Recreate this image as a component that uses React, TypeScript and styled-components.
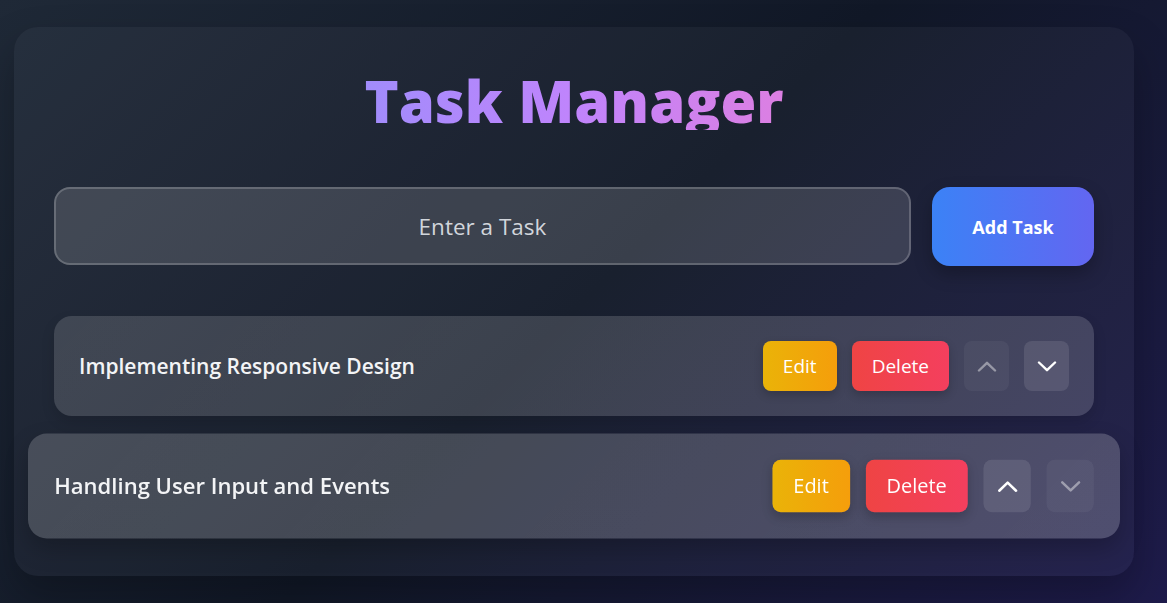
import React from "react";
import styled, { createGlobalStyle, css } from "styled-components";

const Global = createGlobalStyle`
  * { box-sizing: border-box; }
  html, body { margin: 0; padding: 0; }
  body {
    min-height: 100vh;
    font-family: "Open Sans", "Noto Sans", sans-serif;
    background: linear-gradient(135deg, #1f2937 0%, #111827 50%, #1e1b4b 100%);
    background-attachment: fixed;
    overflow: hidden;
  }
`;

const Page = styled.div`
  min-height: 100vh;
  padding: 27px 33px 27px 14px;
  display: flex;
  align-items: center;
`;

const Card = styled.main`
  width: 100%;
  padding: 40px;
  border-radius: 24px;
  background: rgba(255, 255, 255, 0.035);
  box-shadow: 0 20px 40px rgba(0, 0, 0, 0.25);
  display: flex;
  flex-direction: column;
`;

const Title = styled.h1`
  margin: 5px 0 57px;
  text-align: center;
  font-family: "Open Sans", sans-serif;
  font-size: 58px;
  font-weight: 800;
  line-height: 1;
  background: linear-gradient(90deg, #a18cfb 0%, #c084fc 50%, #dc7fe2 100%);
  background-clip: text;
  -webkit-background-clip: text;
  color: transparent;
  align-self: center;
`;

const Form = styled.div`
  display: flex;
  gap: 21px;
  margin-bottom: 50px;
`;

const Input = styled.input`
  flex: 1;
  height: 78px;
  border-radius: 16px;
  border: 2px solid rgba(255, 255, 255, 0.2);
  background: rgba(255, 255, 255, 0.14);
  color: #f3f4f6;
  font-family: "Open Sans", sans-serif;
  font-size: 22.5px;
  text-align: center;
  outline: none;
  &::placeholder { color: #d1d5db; }
`;

const AddButton = styled.button`
  width: 162px;
  height: 79px;
  border: none;
  border-radius: 18px;
  background: linear-gradient(90deg, #3b82f6, #6366f1);
  color: #fff;
  font-family: "Open Sans", sans-serif;
  font-size: 18px;
  font-weight: 700;
  box-shadow: 0 8px 18px rgba(0, 0, 0, 0.25);
  cursor: pointer;
`;

const List = styled.ul`
  list-style: none;
  margin: 0;
  padding: 0;
  display: flex;
  flex-direction: column;
  gap: 20px;
`;

const Row = styled.li<{ $hover?: boolean }>`
  height: 100px;
  padding: 0 25px;
  border-radius: 18px;
  display: flex;
  align-items: center;
  gap: 15px;
  background: linear-gradient(135deg, rgba(255,255,255,0.14), rgba(255,255,255,0.16));
  box-shadow: 0 6px 14px rgba(0, 0, 0, 0.12);
  ${(p) =>
    p.$hover &&
    css`
      transform: scale(1.05);
      background: linear-gradient(135deg, rgba(255,255,255,0.18), rgba(255,255,255,0.2));
      box-shadow: 0 10px 22px rgba(0, 0, 0, 0.22);
    `}
`;

const TaskText = styled.span`
  flex: 1;
  color: #f3f4f6;
  font-size: 21px;
  font-weight: 600;
`;

const ActionButton = styled.button<{ $kind: "edit" | "delete" }>`
  height: 50px;
  padding: 0 ${(p) => (p.$kind === "edit" ? "20px" : "20px")};
  border: none;
  border-radius: 8px;
  color: #fff;
  font-family: "Open Sans", sans-serif;
  font-size: 19px;
  font-weight: 400;
  background: ${(p) =>
    p.$kind === "edit"
      ? "linear-gradient(90deg, #eab308, #f59e0b)"
      : "linear-gradient(90deg, #ef4444, #f43f5e)"};
  box-shadow: 0 4px 10px rgba(0, 0, 0, 0.2);
  cursor: pointer;
`;

const MoveButton = styled.button<{ $disabled?: boolean }>`
  width: 45px;
  height: 50px;
  border: none;
  border-radius: 8px;
  background: rgba(255, 255, 255, 0.1);
  color: #fff;
  display: flex;
  align-items: center;
  justify-content: center;
  padding: 0;
  opacity: ${(p) => (p.$disabled ? 0.45 : 1)};
  cursor: ${(p) => (p.$disabled ? "not-allowed" : "pointer")};
`;

const Chevron = ({ up }: { up?: boolean }) => (
  <svg width="20" height="11" viewBox="0 0 20 11" fill="none">
    <polyline
      points={up ? "2,9.5 10,1.8 18,9.5" : "2,1.5 10,9.2 18,1.5"}
      stroke="currentColor"
      strokeWidth="2.4"
      strokeLinecap="round"
      strokeLinejoin="round"
    />
  </svg>
);

const tasks = ["Implementing Responsive Design", "Handling User Input and Events"];

export default function App() {
  return (
    <>
      <Global />
      <Page>
        <Card>
          <Title>Task Manager</Title>
          <Form>
            <Input placeholder="Enter a Task" />
            <AddButton>Add Task</AddButton>
          </Form>
          <List>
            {tasks.map((t, i) => (
              <Row key={t} $hover={i === 1}>
                <TaskText>{t}</TaskText>
                <ActionButton $kind="edit">Edit</ActionButton>
                <ActionButton $kind="delete">Delete</ActionButton>
                <MoveButton $disabled={i === 0}>
                  <Chevron up />
                </MoveButton>
                <MoveButton $disabled={i === tasks.length - 1}>
                  <Chevron />
                </MoveButton>
              </Row>
            ))}
          </List>
        </Card>
      </Page>
    </>
  );
}
